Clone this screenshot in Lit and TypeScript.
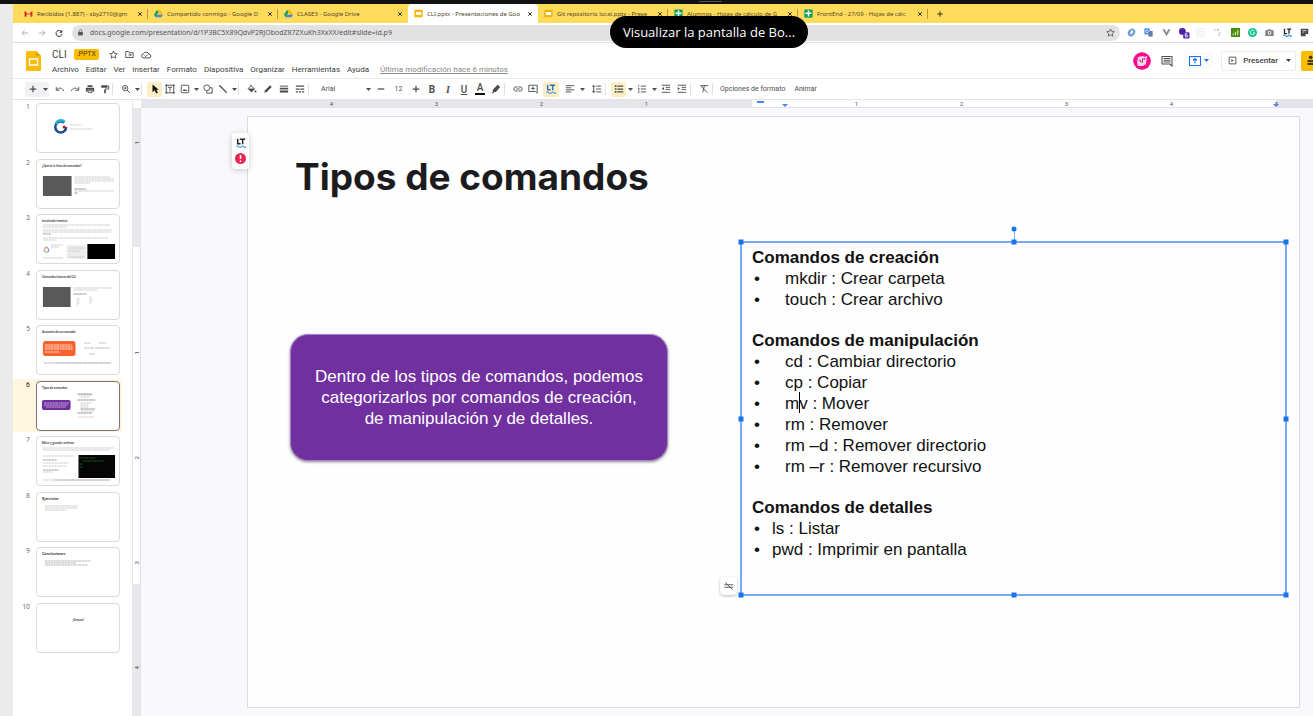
import { LitElement, html, svg, css, nothing } from "lit";
import { customElement } from "lit/decorators.js";
import { classMap } from "lit/directives/class-map.js";

const S = (body: unknown, size = 10) => html`<svg
  class="ic" width=${size} height=${size} viewBox="0 0 24 24" fill="none"
  stroke="currentColor" stroke-width="2.2" aria-hidden="true">${body}</svg>`;

const ico: Record<string, unknown> = {
  plus: svg`<path d="M12 4v16M4 12h16" stroke-width="3"/>`,
  minus: svg`<path d="M4 12h16" stroke-width="3"/>`,
  close: svg`<path d="M5 5l14 14M19 5L5 19" stroke-width="4"/>`,
  undo: svg`<path d="M3 7v8h8M4 14c5-6 13-6 17 3"/>`,
  redo: svg`<path d="M21 7v8h-8M20 14c-5-6-13-6-17 3"/>`,
  print: svg`<path d="M6 3h12v4H6zM2 9h20v9h-4v-4H6v4H2z" fill="currentColor" stroke="none"/><path d="M7 15h10v5H7z"/>`,
  paint: svg`<path d="M3 3h15v6H3z" fill="currentColor" stroke="none"/><path d="M18 5h3v7h-9v3"/><path d="M10 14h4v8h-4z" fill="currentColor" stroke="none"/>`,
  zoom: svg`<circle cx="10" cy="10" r="6.5"/><path d="M15 15l7 7M10 7v6M7 10h6"/>`,
  cursor: svg`<path d="M6 1v19l5-5 4 8 4-2-4-7h6z" fill="#111" stroke="none"/>`,
  textbox: svg`<path d="M3 3h18v18H3z"/><path d="M7 8h10M12 8v10"/><path d="M1 1h4v4H1zM19 1h4v4h-4zM1 19h4v4H1zM19 19h4v4h-4z" fill="currentColor" stroke="none"/>`,
  image: svg`<rect x="3" y="3" width="18" height="18" rx="2"/><path d="M6 17l4-5 3 3 2-2 3 4z" fill="currentColor" stroke="none"/>`,
  shapes: svg`<circle cx="9" cy="9" r="7"/><path d="M17 9h5v13H9v-5"/>`,
  line: svg`<path d="M3 3l18 18" stroke-width="3"/>`,
  fill: svg`<path d="M8 2l10 10-7 7-8-8 7-7z" /><path d="M4 12h13l-6 6z" fill="currentColor"/><circle cx="20.500" cy="18" r="2.500" fill="currentColor" stroke="none"/>`,
  pen: svg`<path d="M3 21l2-6L17 3l4 4L9 19z" fill="currentColor" stroke="none"/>`,
  weight: svg`<path d="M2 5h20"/><path d="M2 11h20" stroke-width="4"/><path d="M2 18h20" stroke-width="5"/>`,
  dash: svg`<path d="M2 5h20" stroke-width="3"/><path d="M2 12h9M13 12h9M2 19h5M9.500 19h5M17 19h5" stroke-width="3"/>`,
  marker: svg`<path d="M4 14L16 2l6 5-10 12H8l-3 3H1l4-4z" fill="currentColor" stroke="none"/>`,
  link: svg`<path d="M11 7H7a5 5 0 0 0 0 10h4M13 7h4a5 5 0 0 1 0 10h-4M8 12h8"/>`,
  addComment: svg`<path d="M2 3h20v19l-4-4H2z"/><path d="M12 6v9M7.500 10.500h9"/>`,
  align: svg`<path d="M2 4h20M2 9h13M2 14h20M2 19h13"/>`,
  spacing: svg`<path d="M10 5h12M10 12h12M10 19h12M4 4v16M1 7l3-4 3 4M1 17l3 4 3-4"/>`,
  bullets: svg`<path d="M8 5h14M8 12h14M8 19h14" stroke-width="3"/><path d="M2 3h4v4H2zM2 10h4v4H2zM2 17h4v4H2z" fill="currentColor" stroke="none"/>`,
  numbers: svg`<path d="M9 5h13M9 12h13M9 19h13"/><path d="M2 3h2v5M2 11h4l-3 3h3M2 17h3v4H2" stroke-width="1.500"/>`,
  outdent: svg`<path d="M2 3h20M11 8h11M11 13h11M2 20h20"/><path d="M7 7v8l-5-4z" fill="currentColor" stroke="none"/>`,
  indent: svg`<path d="M2 3h20M11 8h11M11 13h11M2 20h20"/><path d="M2 7v8l5-4z" fill="currentColor" stroke="none"/>`,
  clear: svg`<path d="M5 4h17M13 4l-4 16M3 3l17 18"/>`,
  back: svg`<path d="M22 12H3M11 4l-8 8 8 8"/>`,
  forward: svg`<path d="M2 12h19M13 4l8 8-8 8"/>`,
  reload: svg`<path d="M20 9a9 9 0 1 0 1 6" stroke-width="3"/><path d="M22 2v9h-9z" fill="currentColor" stroke="none"/>`,
  lock: svg`<path d="M4 10h16v12H4z" fill="currentColor" stroke="none"/><path d="M8 10V6a4 4 0 0 1 8 0v4"/>`,
  star: svg`<path d="M12 2.500l3 6.700 7 .7-5.300 4.800 1.500 7.200L12 18.200 5.800 21.900l1.500-7.200L2 9.900l7-.7z"/>`,
  folder: svg`<path d="M2 4h7l2 3h11v13H2z"/><path d="M9 13h8M13.500 9.500l3.500 3.500-3.500 3.500"/>`,
  cloud: svg`<path d="M7 19a5 5 0 0 1-1-10 7 7 0 0 1 13 1 4.500 4.500 0 0 1 0 9z"/><path d="M8 13l3 3 5-5"/>`,
  comment: svg`<path d="M2 3h20v19l-4-4H2z"/><path d="M5 7h14M5 10.500h14M5 14h14"/>`,
  play: svg`<path d="M3 3h18v18H3z"/><path d="M9 8v8l6-4z" fill="currentColor" stroke="none"/>`,
  upload: svg`<path d="M1 3h22v18H1z"/><path d="M12 17V8M8 11l4-4 4 4"/>`,
  people: svg`<circle cx="8" cy="5" r="4" fill="currentColor" stroke="none"/><circle cx="18" cy="5" r="4" fill="currentColor" stroke="none"/><path d="M1 11h22v4H1zM1 17h22v5H1z" fill="currentColor" stroke="none"/>`,
  noEdit: svg`<path d="M1 9h21M1 15h21M3 3l18 18"/>`,
};

const caret = html`<svg class="ic" width="5" height="3" viewBox="0 0 10 6" aria-hidden="true"><path d="M0 0h10L5 6z" fill="currentColor"/></svg>`;

const fav: Record<string, unknown> = {
  gmail: svg`<path d="M2 20V5l10 8 10-8v15h-5v-8l-5 4-5-4v8z" fill="#ea4335"/><path d="M2 20V6l4 3v11z" fill="#c5221f"/><path d="M22 20V6l-4 3v11z" fill="#d93025"/>`,
  drive: svg`<path d="M8 2h8l8 13h-8z" fill="#fbbc04"/><path d="M8 2L0 15l4 7 8-13z" fill="#1e9e58"/><path d="M8 15h16l-4 7H4z" fill="#4285f4"/>`,
  slides: svg`<rect x="1" y="2" width="22" height="20" rx="2" fill="#f4b400"/><path d="M5 8h14v8H5z" fill="#fff"/>`,
  sheets: svg`<rect x="1" y="1" width="22" height="22" rx="2" fill="#0f9d58"/><path d="M10 4h4v5h6v4h-6v7h-4v-7H4V9h6z" fill="#fff"/>`,
};
const favicon = (k: string) => html`<svg class="ic" width="9" height="9" viewBox="0 0 24 24" aria-hidden="true">${fav[k]}</svg>`;

const tabs = [
  ["gmail", "Recibidos (1.887) - sby2710@gm"],
  ["drive", "Compartido conmigo - Google D"],
  ["drive", "CLASE3 - Google Drive"],
  ["slides", "CLI.pptx - Presentaciones de Goo"],
  ["slides", "Git repositorio local.pptx - Prese"],
  ["sheets", "Alumnos - Hojas de cálculo de G"],
  ["sheets", "FrontEnd - 27/09 - Hojas de cálc"],
];

const extensions = [
  svg`<ellipse cx="12" cy="12" rx="11" ry="9" transform="rotate(-50 12 12)" fill="#6f9fd0"/><ellipse cx="13" cy="12" rx="6" ry="3" transform="rotate(-60 12 12)" fill="#fff"/>`,
  svg`<path d="M1 1h14v16H1z" fill="#4285f4"/><path d="M12 8h11v15H12z" fill="#5f7fa8"/><circle cx="8" cy="9" r="3.500" fill="none" stroke="#fff" stroke-width="2"/>`,
  svg`<path d="M1 3h6l5 9 5-9h6L12 22z" fill="#8a8a8a"/>`,
  svg`<circle cx="9" cy="9" r="9" fill="#4b1f9e"/><rect x="11" y="11" width="17" height="17" rx="2" fill="#5b2bb5"/><path d="M22 15h-5v9h5v-5h-5" stroke="#fff" stroke-width="2" fill="none"/>`,
  svg`<rect x="3" y="2" width="18" height="20" rx="2" fill="none" stroke="#e3e3e3" stroke-width="2"/><path d="M7 9h10M7 14h10" stroke="#e3e3e3" stroke-width="2"/>`,
  svg`<circle cx="5" cy="5" r="2" fill="#aaa"/><circle cx="13" cy="5" r="2" fill="#777"/><circle cx="18" cy="12" r="2" fill="#bbb"/><circle cx="16" cy="18" r="2" fill="#999"/>`,
  svg`<path d="M0 0h24v24H0z" fill="#4a8b12"/><path d="M6 19v-5M12 19v-9M18 19V5" stroke="#cfe8a8" stroke-width="3"/>`,
  svg`<circle cx="12" cy="12" r="12" fill="#14c38e"/><path d="M17 8a6 6 0 1 0 1 5h-5" stroke="#fff" stroke-width="2.500" fill="none"/>`,
  svg`<path d="M1 6h6l2-3h6l2 3h6v15H1z" fill="#7d7d7d"/><circle cx="12" cy="13" r="5" fill="#eee"/><circle cx="12" cy="13" r="2.500" fill="#7d7d7d"/>`,
  svg`<path d="M4 2v13h7M11 3h11M16 3v12" stroke="#222" stroke-width="3.500" fill="none"/><path d="M1 21q3-4 6 0t6 0 6 0 4-1" stroke="#2e9bd6" stroke-width="3" fill="none"/>`,
  svg`<path d="M2 2h20v14h-7v6H2z" fill="#4b4b4b"/><path d="M7 7h10M7 11h4" stroke="#ddd" stroke-width="2.500"/>`,
];

const menus = ["Archivo", "Editar", "Ver", "Insertar", "Formato", "Diapositiva", "Organizar", "Herramientas", "Ayuda"];

const rows = (list: number[][], c = "#c2c2c6") =>
  list.map(([x, y, w]) => svg`<path d="M${x} ${y}h${w}" stroke=${c} stroke-width=".8" stroke-dasharray="3 .4 2 .3"/>`);
const head = (t: string, cls = "th") => svg`<text x="5" y="7" class=${cls}>${t}</text>`;

const thumbs = [
  svg`<circle cx="24" cy="23" r="5.500" fill="none" stroke="#1f4e8c" stroke-width="2.600" stroke-dasharray="29 6"/><path d="M19 20a5.500 5.500 0 0 1 9-2" fill="none" stroke="#22b0d8" stroke-width="2.600"/><circle cx="27.500" cy="23" r="1.600" fill="#c2183c"/>${rows([[33, 21, 12], [33, 25, 23]])}`,
  svg`${head("¿Qué es la línea de comandos?")}<path d="M6 16h29v20H6z" fill="#595959"/>${rows([[38, 17, 36], [38, 19, 40], [38, 21, 40], [38, 23, 16], [38, 31, 40]])}${rows([[38, 29, 12], [38, 33, 3]], "#777")}`,
  svg`${head("Instalando terminal")}${rows([[6, 10, 68], [6, 12, 24], [6, 15, 70], [6, 17, 69], [6, 23, 66], [6, 25, 14], [14, 30, 12], [14, 32, 8], [6, 43, 20]])}${rows([[6, 19, 8]], "#888")}<path d="M30 30h20v14H30z" fill="#ededed"/>${rows([[32, 33, 16], [32, 36, 12], [32, 42, 16]], "#c4c4c4")}<path d="M7 36l2-4 2 1" stroke="#ea6a5a" fill="none"/><path d="M11 33l1 3-1 1" stroke="#4285f4" fill="none"/><path d="M7 36l2 1h2" stroke="#5cb85c" fill="none"/><path d="M51 29h28v15H51z" fill="#000"/>`,
  svg`${head("Comandos básicos del CLI")}<path d="M6 16h28v20H6z" fill="#595959"/>${rows([[37, 17, 40], [37, 19, 24], [40, 28, 3], [40, 30, 3], [40, 32, 3], [40, 34, 2], [53, 26, 2], [53, 28, 3], [53, 30, 3], [53, 32, 2]])}${rows([[37, 23, 13]], "#777")}`,
  svg`${head("Anatomía de un comando")}<rect x="6" y="15" width="33" height="15" rx="2.500" fill="#f9622c"/>${rows([[8, 19, 27], [8, 21, 28], [8, 23, 28], [8, 26, 15]], "#fff")}${rows([[48, 17, 6], [63, 17, 7], [48, 22, 5], [54, 22, 4], [59, 22, 15], [53, 28, 6], [7, 37, 12]], "#aaa")}${rows([[19, 37, 56]], "#888")}`,
  svg`${head("Tipos de comandos")}<rect x="5" y="18" width="29" height="10" rx="2" fill="#6f2da0"/>${rows([[7, 21, 25], [7, 23, 24], [9, 25, 20]], "#d5c2e6")}${rows([[42, 13, 14], [44, 15, 10], [44, 21, 12], [44, 23, 8], [44, 25, 8], [44, 29, 14], [42, 35, 16]])}${rows([[41, 12, 15], [41, 18, 18], [44, 27, 15], [41, 31, 15]], "#777")}`,
  svg`${head("Editar y guardar archivos")}${rows([[6, 11, 72], [6, 13, 68], [6, 19, 32], [6, 26, 26], [6, 29, 24], [6, 35, 10], [6, 43, 12]])}${rows([[6, 23, 14], [6, 33, 16], [18, 43, 56]], "#888")}<path d="M42 18h37v23H42z" fill="#050505"/>${rows([[43, 21, 16], [46, 24, 22], [43, 27, 3], [43, 30, 3]], "#1f6a1f")}`,
  svg`${head("Ejercicios", "th big")}${rows([[8, 13, 34], [8, 15, 33], [8, 17, 22]])}`,
  svg`${head("Conclusiones", "th big")}${rows([[8, 13, 46], [8, 15, 32], [8, 17, 43]], "#a8a8ac")}`,
  svg`<text x="36" y="17" class="th">¡Gracias!</text>`,
];

const groups: { title: string; wide: boolean; items: string[] }[] = [
  { title: "Comandos de creación", wide: true, items: ["mkdir : Crear carpeta", "touch : Crear archivo"] },
  {
    title: "Comandos de manipulación",
    wide: true,
    items: ["cd : Cambiar directorio", "cp : Copiar", "mv : Mover", "rm : Remover", "rm –d : Remover directorio", "rm –r : Remover recursivo"],
  },
  { title: "Comandos de detalles", wide: false, items: ["ls : Listar", "pwd : Imprimir en pantalla"] },
];

@customElement("app-root")
export class AppRoot extends LitElement {
  static styles = css`
    :host { display: block; font-family: Roboto, "Liberation Sans", sans-serif; color: #3c4043; }
    * { box-sizing: border-box; }
    button, input, select { font: inherit; color: inherit; border: 0; background: none; padding: 0; margin: 0; appearance: none; min-width: 0; }
    ul, ol, h1, h2, p { margin: 0; padding: 0; list-style: none; font-weight: inherit; font-size: inherit; }
    .ic { display: block; flex: none; overflow: visible; }
    .row { display: flex; align-items: center; }

    .screen { min-height: 100vh; display: flex; flex-direction: column; background: #ebebeb; position: relative; overflow: hidden; }
    .top { height: 4px; background: #111; }
    .notch { position: absolute; left: 699px; top: 1px; width: 23px; height: 1px; background: #555; }
    .window { flex: 1; margin-left: 13px; display: flex; flex-direction: column; background: #fff; }

    .tabs { height: 19px; padding-left: 5px; background: #ffdb5c; font: 6px "Noto Sans", sans-serif; color: #4f4629; }
    .tab { flex: 0 1 130px; min-width: 0; height: 18px; padding: 0 5px 0 6px; gap: 4px; position: relative; }
    .tab::after { content: ""; position: absolute; right: 0; top: 4px; width: 1px; height: 10px; background: #b89a3a; }
    .tab .name { flex: 1; overflow: hidden; white-space: nowrap; text-align: left; }
    .tab .ic { color: #332c14; }
    .tab.on { background: #fff; height: 19px; border-radius: 4px 4px 0 0; }
    .tab.on::after, .tab.pre::after { display: none; }
    .newtab { padding-left: 8px; color: #3b3315; }

    .address { height: 20px; border-bottom: 1px solid #dcdcdc; }
    .nav { width: 17px; display: grid; place-items: center; color: #999; }
    .nav.dark { color: #333; }
    .omni { flex: 1; height: 16px; margin-left: 5px; padding: 0 5px; gap: 6px; border-radius: 8px; background: #e2e2e2; color: #555; }
    .omni input { flex: 1; font: 7px "Noto Sans", sans-serif; color: #555; }
    .exts { flex: 0 0 190px; margin-left: 3px; }
    .ext { flex: 1; display: grid; place-items: center; }

    .header { height: 36px; padding-left: 13px; border-bottom: 1px solid #e8e8e8; }
    .meta { flex: 1; margin-left: 11px; padding-top: 2px; display: flex; flex-direction: column; gap: 3px; }
    .title { height: 13px; gap: 7px; font-size: 10px; }
    .badge { padding: 0 3px; margin-right: 3px; font-size: 7px; line-height: 11px; border-radius: 2px; background: #fbbc04; color: #4c3a00; }
    .menus { gap: 7px; font-size: 8px; line-height: 11px; }
    .menus a { margin-left: 4px; color: #888; }
    .actions { align-self: center; }
    .avatar { width: 18px; height: 18px; margin-right: 10px; border-radius: 50%; display: block; }
    .bubble { margin-right: 11px; color: #555; }
    .up { width: 29px; height: 15px; margin-right: 8px; gap: 3px; justify-content: center; border-radius: 8px; border: 1px solid #f1f1f1; color: #1a73e8; }
    .present { height: 20px; border: 1px solid #ececec; border-radius: 2px; font-size: 8px; font-weight: 500; }
    .present .go { gap: 6px; padding-left: 6px; }
    .present .drop { width: 14px; margin-left: 3px; display: grid; place-items: center; }
    .share { width: 12px; height: 20px; margin-left: 5px; padding-left: 6px; overflow: hidden; border-radius: 2px 0 0 2px; background: #fbbc04; color: #4c3a00; }

    .tools { height: 21px; padding-left: 12px; font-size: 7px; border-bottom: 1px solid #e3e3e8; color: #4c4c50; }
    .tools button { flex: none; height: 15px; display: grid; place-items: center; border-radius: 2px; }
    .w16 { width: 16px; }
    .w15 { width: 15px; }
    .w8 { width: 8px; }
    .tools .hot { background: #feefc3; }
    .tools .pale { background: #f1f1f3; }
    .sep { flex: none; width: 6px; height: 12px; border-left: 1px solid #e2e2e2; }
    .gap { flex: none; width: 3px; }
    .font { width: 59px; padding: 0 2px 0 7px; }
    .font select { flex: 1; }
    .size { width: 19px; height: 13px; text-align: center; }
    .glyph { font-size: 10px; font-weight: 700; line-height: 11px; }
    .glyph.i { font-style: italic; font-family: "Liberation Serif", serif; }
    .glyph.u { font-weight: 500; text-decoration: underline; }
    .glyph.a { font-weight: 500; line-height: 10px; border-bottom: 2px solid #111; padding: 0 2px; }
    .tools .text { margin: 0 7px 0 2px; white-space: nowrap; }

    .work { flex: 1; display: flex; }
    .film { width: 120px; padding: 3px 12px 0 0; display: flex; flex-direction: column; gap: 6px; overflow: hidden; border-right: 1px solid #e6e6ea; font-size: 7px; color: #777; }
    .film li { display: flex; gap: 6px; height: 50px; }
    .film li:nth-child(even) { height: 49px; }
    .film .n { width: 17px; text-align: right; line-height: 8px; flex: none; }
    .film button { flex: 1; height: 50px; border: 1px solid #dadade; border-radius: 4px; overflow: hidden; background: #fff; }
    .film li.cur { background: #fff6e0; box-shadow: 0 0 0 2px #fff6e0; color: #222; }
    .film li.cur button { border-color: #77737c; }
    .film svg { display: block; width: 100%; height: 100%; }
    .th { font: 700 3px Lato, sans-serif; fill: #333; }
    .th.big { font-size: 4px; }

    .editor { flex: 1; min-width: 0; display: flex; flex-direction: column; font-size: 6px; color: #555; }
    .hruler { height: 8px; margin-left: 8px; padding-left: 138px; display: flex; overflow: hidden; position: relative;
      background: linear-gradient(90deg, #e6e6ea 611px, #fff 611px 1135px, #e2e4ea 1135px); border-bottom: 1px solid #e2e2e8; }
    .hruler span { flex: none; width: 105px; line-height: 8px; text-align: center; }
    .mark { position: absolute; background: #4285f4; }
    .mark.bar { left: 616px; top: 1px; width: 7px; height: 2px; }
    .mark.one, .mark.two { top: 4px; width: 6px; height: 3px; clip-path: polygon(0 0, 100% 0, 50% 100%); }
    .mark.one { left: 641px; }
    .mark.two { left: 1132px; }
    .lower { flex: 1; display: flex; min-height: 0; }
    .vruler { width: 8px; overflow: hidden; border-right: 1px solid #e2e2e8;
      background: linear-gradient(#e8e8ec 139px, #fff 139px 476px, #e8e8ec 476px); }
    .vruler ol { height: 0; margin-top: -18px; }
    .vruler li { height: 105px; display: grid; place-items: center; writing-mode: sideways-lr; line-height: 7px; }
    .stage { flex: 1; min-width: 0; padding: 8px 13px 7px 106px; background: #f9f8fc; }
    .slide { position: relative; aspect-ratio: 16 / 9; background: #fefefe; border: 1px solid #dcdce0; }

    .slide h1 { position: absolute; left: 47px; top: 36px; font: 700 37px/48px Inter, sans-serif; color: #1c1c20; white-space: nowrap; }
    .note { position: absolute; left: 42px; top: 217px; width: 378px; height: 127px; padding: 0 20px; display: grid; place-items: center; text-align: center;
      border-radius: 18px; background: #7030a0; border: 1px solid #a884c4; box-shadow: 0 1px 3px #0007; color: #fff; font: 17px/21px "Liberation Sans", sans-serif; }
    .box { position: absolute; left: 492px; top: 124px; width: 547px; height: 355px; padding: 4px 0 0 10px; border: 2px solid #78aaf0; color: #111; font: 17px/21px "Liberation Sans", sans-serif; }
    .box h2 { font-weight: 700; }
    .box ul { margin-bottom: 20px; }
    .box li { display: flex; }
    .box li::before { content: "•"; width: 18px; padding-left: 2px; }
    .box .wide li::before { width: 31px; }
    .cursor { position: absolute; left: 57px; top: 149px; width: 1px; height: 21px; background: #000; }
    .h { position: absolute; width: 5px; height: 5px; background: #1a73e8; transform: translate(-50%, -50%); }
    .l { left: -1px; } .c { left: 50%; } .r { left: calc(100% + 1px); }
    .t { top: -1px; } .m { top: 50%; } .b { top: calc(100% + 1px); }
    .knob { top: -14px; border-radius: 50%; }
    .stem { position: absolute; left: 50%; top: -14px; width: 1px; height: 12px; background: #78aaf0; }
    .nofit { position: absolute; left: 472px; top: 460px; width: 17px; height: 18px; display: grid; place-items: center; border-radius: 4px; background: #fff; box-shadow: 0 1px 3px #0004; color: #555; }
    .lt { position: absolute; left: -16px; top: 16px; width: 17px; height: 36px; display: flex; flex-direction: column; align-items: center; justify-content: space-evenly; border-radius: 3px; background: #fff; box-shadow: 0 1px 6px #0003; }
    .pill { position: absolute; left: 610px; top: 16px; width: 198px; height: 32px; border-radius: 16px; background: #000; color: #fff; display: grid; place-items: center; font: 13px "Open Sans", sans-serif; }
  `;

  private tool(name: string, label: string, cls = "w16") {
    return html`<button class=${cls} aria-label=${label}>${S(ico[name])}</button>`;
  }
  private drop(label: string, cls = "w8") {
    return html`<button class=${cls} aria-label=${label}>${caret}</button>`;
  }

  private renderTools() {
    const sep = html`<span class="sep"></span>`;
    const gap = html`<span class="gap"></span>`;
    return html`<div class="tools row" role="toolbar">
      ${this.tool("plus", "Nueva diapositiva", "w16 pale")}${this.drop("Diseños", "w8 pale")}${gap}
      ${this.tool("undo", "Deshacer", "w15")}${this.tool("redo", "Rehacer", "w15")}${this.tool("print", "Imprimir", "w15")}${this.tool("paint", "Copiar formato", "w15")}${sep}
      ${this.tool("zoom", "Zoom", "w15")}${this.drop("Nivel de zoom")}${sep}
      ${this.tool("cursor", "Seleccionar", "w15 hot")}${this.tool("textbox", "Cuadro de texto", "w15")}${this.tool("image", "Imagen", "w15")}${this.drop("Insertar imagen")}
      ${this.tool("shapes", "Forma", "w15")}${this.tool("line", "Línea", "w15")}${this.drop("Tipo de línea")}${sep}
      ${this.tool("fill", "Relleno")}${this.tool("pen", "Color del borde")}${this.tool("weight", "Grosor")}${this.tool("dash", "Guion")}${sep}
      <label class="font row"><select aria-label="Fuente"><option>Arial</option></select>${caret}</label>
      ${this.tool("minus", "Reducir tamaño")}<input class="size" aria-label="Tamaño" value="12" />${this.tool("plus", "Aumentar tamaño")}
      <button class="w16" aria-label="Negrita"><span class="glyph">B</span></button>
      <button class="w16" aria-label="Cursiva"><span class="glyph i">I</span></button>
      <button class="w16" aria-label="Subrayado"><span class="glyph u">U</span></button>
      <button class="w16" aria-label="Color del texto"><span class="glyph a">A</span></button>
      ${this.tool("marker", "Resaltar")}${sep}
      ${this.tool("link", "Enlace", "w15")}${this.tool("addComment", "Comentario", "w15")}${gap}
      <button class="w16 hot" aria-label="LanguageTool">${this.ltLogo("#2b6cc4")}</button>${gap}
      ${this.tool("align", "Alinear")}${this.drop("Opciones de alineación")}${gap}${this.tool("spacing", "Interlineado")}${sep}
      ${this.tool("bullets", "Viñetas", "w15 hot")}${this.drop("Tipos de viñeta")}${this.tool("numbers", "Numeración")}${this.drop("Tipos de numeración")}
      ${this.tool("outdent", "Reducir sangría")}${this.tool("indent", "Aumentar sangría")}${sep}
      ${this.tool("clear", "Borrar formato")}${sep}
      <button class="text">Opciones de formato</button><button class="text">Animar</button>
    </div>`;
  }

  private ltLogo(c: string) {
    return html`<svg class="ic" width="10" height="10" viewBox="0 0 24 24" fill="none" aria-hidden="true">
      <path d="M4 2v12h7M9 3h13M16 3v12" stroke=${c} stroke-width="3.500" /><path d="M1 21q3-4 6 0t6 0 6 0 4-1" stroke="#3a8be0" stroke-width="2.500" /></svg>`;
  }

  private renderSlide() {
    const handles = ["l t", "c t", "r t", "l m", "r m", "l b", "c b", "r b"];
    return html`<section class="slide">
      <h1>Tipos de comandos</h1>
      <div class="note"><p>Dentro de los tipos de comandos, podemos categorizarlos por comandos de creación, de manipulación y de detalles.</p></div>
      <div class="box">
        ${groups.map((g) => html`<h2>${g.title}</h2><ul class=${g.wide ? "wide" : "tight"}>${g.items.map((i) => html`<li>${i}</li>`)}</ul>`)}
        <i class="cursor"></i><i class="stem"></i><i class="h c knob"></i>
        ${handles.map((p) => html`<i class="h ${p}"></i>`)}
      </div>
      <button class="nofit" aria-label="Autoajuste">${S(ico.noEdit)}</button>
      <div class="lt">${this.ltLogo("#222")}
        <svg class="ic" width="11" height="11" viewBox="0 0 22 22" aria-hidden="true"><circle cx="11" cy="11" r="11" fill="#e8264f" /><path d="M11 4v8M11 15v3" stroke="#fff" stroke-width="3" /></svg>
      </div>
    </section>`;
  }

  render() {
    return html`<div class="screen">
      <div class="top"></div><i class="notch"></i>
      <div class="window">
        <nav class="tabs row">
          ${tabs.map(([k, t], i) => html`<div class=${classMap({ tab: true, row: true, on: i === 3, pre: i === 2 })}>
            ${favicon(k)}<button class="name">${t}</button><button aria-label="Cerrar">${S(ico.close, 6)}</button></div>`)}
          <button class="newtab" aria-label="Nueva pestaña">${S(ico.plus, 8)}</button>
        </nav>
        <div class="address row">
          <span class="gap"></span>
          <button class="nav" aria-label="Atrás">${S(ico.back, 8)}</button>
          <button class="nav" aria-label="Adelante">${S(ico.forward, 8)}</button>
          <button class="nav dark" aria-label="Recargar">${S(ico.reload, 8)}</button>
          <div class="omni row">${S(ico.lock, 7)}
            <input aria-label="Dirección" value="docs.google.com/presentation/d/1P3BC5X89QdvP2RJObodZ87ZXuKh3XxXX/edit#slide=id.p9" />
            ${S(ico.star, 9)}</div>
          <div class="exts row">${extensions.map((e) => html`<span class="ext"><svg class="ic" width="9" height="9" viewBox="0 0 24 24" aria-hidden="true">${e}</svg></span>`)}</div>
        </div>
        <header class="header row">
          <svg class="ic" width="15" height="20" viewBox="0 0 15 20" aria-hidden="true"><path d="M1.500 0H10l5 5v13.500a1.500 1.500 0 0 1-1.500 1.500h-12A1.500 1.500 0 0 1 0 18.500v-17A1.500 1.500 0 0 1 1.500 0z" fill="#fbbc04" /><path d="M10 0l5 5h-5z" fill="#e69f00" /><path d="M3.500 8h8v6h-8z" fill="none" stroke="#fff" stroke-width="1.300" /></svg>
          <div class="meta">
            <div class="title row"><span>CLI</span><span class="badge">.PPTX</span>${S(ico.star, 9)}${S(ico.folder, 9)}${S(ico.cloud, 10)}</div>
            <div class="menus row">${menus.map((m) => html`<button>${m}</button>`)}<a href="#">Última modificación hace 6 minutos</a></div>
          </div>
          <div class="actions row">
            <svg class="avatar" viewBox="0 0 18 18" aria-hidden="true"><circle cx="9" cy="9" r="9" fill="#f5108a" /><path d="M5 5l5-1 1 1 3-1-1 8-3 2H5l-1-3z" fill="#fbd3e6" /><path d="M6 8l2 1-1 1M10 6l-1 5M12 6l-1 2" stroke="#c22a7c" fill="none" /></svg>
            <button class="bubble" aria-label="Comentarios">${S(ico.comment, 12)}</button>
            <button class="up row" aria-label="Compartir en reunión">${S(ico.upload, 12)}${caret}</button>
            <div class="present row"><button class="go row">${S(ico.play, 9)}Presentar</button><button class="drop" aria-label="Opciones de presentación">${caret}</button></div>
            <button class="share" aria-label="Compartir">${S(ico.people, 11)}</button>
          </div>
        </header>
        ${this.renderTools()}
        <div class="work">
          <ol class="film">${thumbs.map((t, i) => html`<li class=${i === 5 ? "cur" : nothing}><span class="n">${i + 1}</span>
            <button aria-label="Diapositiva ${i + 1}"><svg viewBox="0 0 83 48" preserveAspectRatio="none">${t}</svg></button></li>`)}</ol>
          <main class="editor">
            <div class="hruler">${["4", "3", "2", "1", "", "1", "2", "3", "4", "5"].map((n) => html`<span>${n}</span>`)}
              <i class="mark bar"></i><i class="mark one"></i><i class="mark two"></i></div>
            <div class="lower">
              <div class="vruler"><ol>${["1", "", "1", "2", "3", "4"].map((n) => html`<li>${n}</li>`)}</ol></div>
              <div class="stage">${this.renderSlide()}</div>
            </div>
          </main>
        </div>
      </div>
      <div class="pill">Visualizar la pantalla de Bo...</div>
    </div>`;
  }
}
